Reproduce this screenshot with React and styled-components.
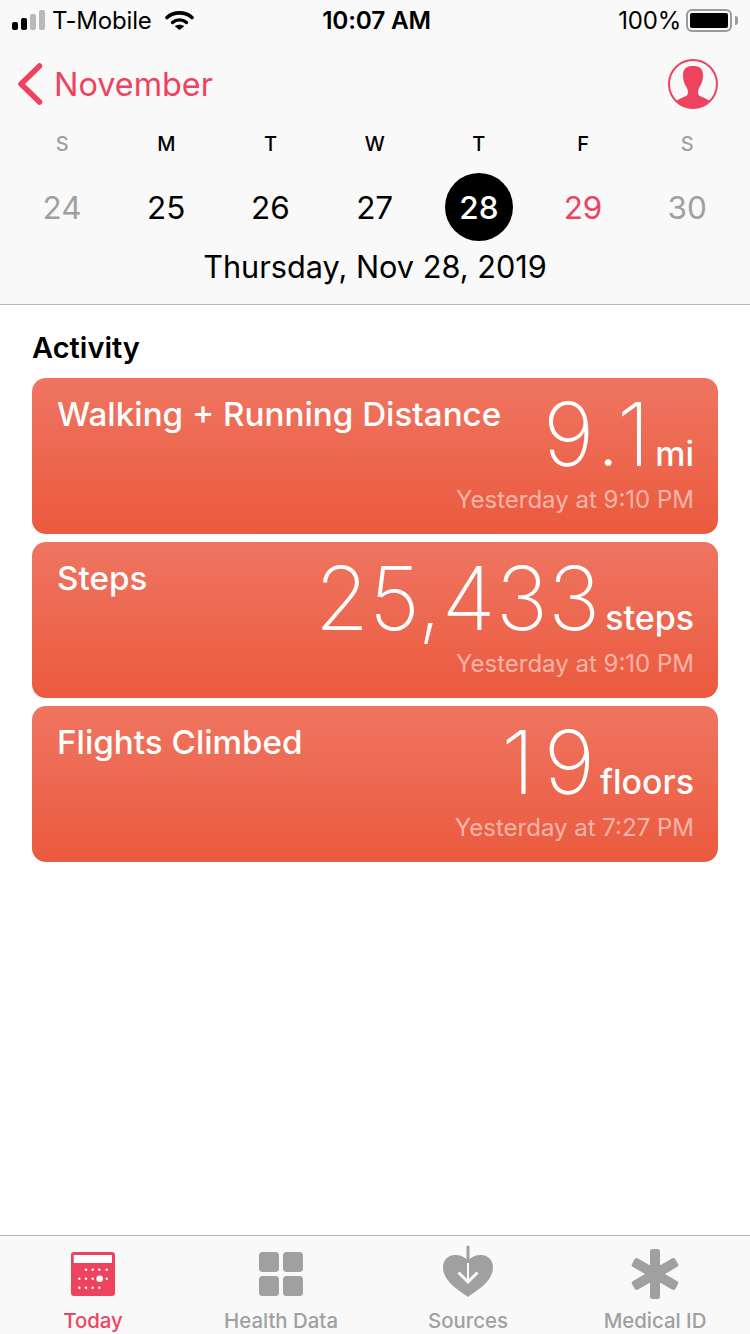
import React from 'react';
import styled, { createGlobalStyle } from 'styled-components';

const Global = createGlobalStyle`
  html, body {
    margin: 0;
    padding: 0;
    background: #ffffff;
  }
  * {
    box-sizing: border-box;
  }
`;

const Page = styled.div`
  width: 750px;
  height: 1334px;
  display: flex;
  flex-direction: column;
  font-family: Inter, "Liberation Sans", sans-serif;
  color: #000;
  overflow: hidden;
`;

const Header = styled.header`
  height: 305px;
  background: #f9f9f9;
  border-bottom: 1px solid #b8b8ba;
  display: flex;
  flex-direction: column;
`;

const StatusBar = styled.div`
  height: 40px;
  padding: 0 12px;
  display: grid;
  grid-template-columns: 1fr auto 1fr;
  align-items: center;
  font-size: 24px;
  letter-spacing: -0.2px;
`;

const StatusLeft = styled.div`
  display: flex;
  align-items: center;
  gap: 7px;
`;

const StatusRight = styled.div`
  display: flex;
  align-items: center;
  justify-content: flex-end;
  gap: 5px;
`;

const Clock = styled.div`
  margin-left: 3px;
  font-size: 24.400px;
  font-weight: 600;
`;

const Signal = styled.div`
  display: flex;
  align-items: flex-end;
  gap: 3px;
  height: 20px;
`;

const SignalBar = styled.span`
  width: 6px;
  height: ${p => p.$h}px;
  border-radius: 2px;
  background: ${p => (p.$on ? '#000' : '#b9b9b9')};
`;

const WifiGlyph = styled.svg`
  margin-left: 6px;
`;

const Battery = styled.div`
  width: 46px;
  height: 23px;
  border: 2px solid #9a9a9a;
  border-radius: 6px;
  padding: 2px;
  margin-right: 6px;
  position: relative;
  &::after {
    content: '';
    position: absolute;
    right: -8px;
    top: 5px;
    width: 3px;
    height: 9px;
    background: #9a9a9a;
    border-radius: 0 3px 3px 0;
  }
`;

const BatteryFill = styled.div`
  height: 100%;
  background: #000;
  border-radius: 2px;
`;

const NavRow = styled.div`
  height: 60px;
  margin-top: 14px;
  padding: 0 32px 0 17px;
  display: flex;
  align-items: center;
  justify-content: space-between;
`;

const BackLink = styled.div`
  display: flex;
  align-items: center;
  gap: 10px;
  color: #ee435f;
  font-size: 32.400px;
`;

const Weekdays = styled.div`
  display: grid;
  grid-template-columns: repeat(7, 104.200px);
  padding: 0 10px;
  margin-top: 16px;
  height: 28px;
  align-items: center;
`;

const Weekday = styled.div`
  text-align: center;
  font-size: 20px;
  font-weight: 500;
  color: ${p => (p.$muted ? '#a0a0a0' : '#000')};
`;

const Days = styled.div`
  display: grid;
  grid-template-columns: repeat(7, 104.200px);
  padding: 0 10px;
  margin-top: 14px;
  height: 70px;
  align-items: center;
  justify-items: center;
`;

const Day = styled.div`
  width: 68px;
  height: 68px;
  border-radius: 50%;
  display: flex;
  align-items: center;
  justify-content: center;
  font-size: 31.500px;
  font-weight: ${p => (p.$selected ? 500 : 400)};
  background: ${p => (p.$selected ? '#000' : 'transparent')};
  color: ${p => (p.$selected ? '#fff' : p.$color || '#000')};
`;

const DateLine = styled.div`
  text-align: center;
  font-size: 30.700px;
  line-height: 40px;
  margin-top: 5px;
`;

const Main = styled.main`
  flex: 1;
  padding: 24px 32px 0;
  background: #fff;
`;

const SectionTitle = styled.h2`
  margin: 0 0 12px;
  font-size: 29px;
  line-height: 37px;
  font-weight: 600;
`;

const Cards = styled.div`
  display: flex;
  flex-direction: column;
  gap: 8px;
`;

const Card = styled.section`
  height: 156px;
  border-radius: 14px;
  padding: 14px 24px 0 25px;
  background: linear-gradient(180deg, #ef7561 0%, #eb5a3e 100%);
  color: #fff;
  display: flex;
  flex-direction: column;
`;

const CardTop = styled.div`
  display: flex;
  align-items: flex-start;
  justify-content: space-between;
`;

const CardTitle = styled.div`
  font-size: 33.200px;
  line-height: 44px;
  font-weight: 500;
  white-space: nowrap;
`;

const Reading = styled.div`
  display: flex;
  align-items: baseline;
  gap: 5px;
  white-space: nowrap;
`;

const Value = styled.span`
  font-size: 88px;
  line-height: 84px;
  font-weight: 250;
  letter-spacing: ${p => p.$track}px;
  margin-right: ${p => -p.$track}px;
`;

const Unit = styled.span`
  font-size: 34px;
  line-height: 40px;
  font-weight: 500;
`;

const Stamp = styled.div`
  margin-top: 9px;
  align-self: flex-end;
  font-size: 24px;
  line-height: 30px;
  white-space: nowrap;
  color: rgba(255, 255, 255, 0.55);
`;

const TabBar = styled.nav`
  height: 99px;
  background: #f9f9f9;
  border-top: 1px solid #b8b8ba;
  display: grid;
  grid-template-columns: 186px 190px 184px 190px;
`;

const Tab = styled.div`
  display: flex;
  flex-direction: column;
  align-items: center;
  color: ${p => (p.$active ? '#ee435f' : '#a0a0a0')};
  font-size: 20.400px;
  font-weight: 500;
  padding-top: 8px;
`;

const TabIcon = styled.svg`
  width: 60px;
  height: 60px;
  display: block;
  fill: currentColor;
`;

const TabLabel = styled.span`
  line-height: 26px;
  margin-top: 4px;
`;

const WifiIcon = () => (
  <WifiGlyph width="29" height="20" viewBox="0 0 29 20">
    <path d="M2 7.500C9 1.300 20 1.300 27 7.500" fill="none" stroke="#000" strokeWidth="3.600" strokeLinecap="round" />
    <path d="M7.500 12.500C11.500 9 17.500 9 21.500 12.500" fill="none" stroke="#000" strokeWidth="3.400" strokeLinecap="round" />
    <path d="M9.800 16.200C12.500 14.200 16.500 14.200 19.200 16.200L14.500 20z" fill="#000" />
  </WifiGlyph>
);

const Chevron = () => (
  <svg width="27" height="44" viewBox="0 0 27 44">
    <path d="M22.500 4 L4 22 L22.500 40" fill="none" stroke="#ee435f" strokeWidth="5.500" strokeLinecap="round" strokeLinejoin="round" />
  </svg>
);

const Avatar = () => (
  <svg width="50" height="50" viewBox="0 0 50 50">
    <defs>
      <clipPath id="avatar-clip">
        <circle cx="25" cy="25" r="24" />
      </clipPath>
    </defs>
    <path
      clipPath="url(#avatar-clip)"
      d="M25 7C19 7 15 9 15 16c0 3 .5 6 1.500 8.500 .6 1.500 1.500 2.500 2.200 4 .7 1.500 1.300 3 1.300 4.500 0 1.500-.5 3-1.500 3.700C15 38.500 10 39.500 7 44v8h36v-8c-3-4.500-8-5.500-11.500-7.300-1-.7-1.500-2.200-1.500-3.700 0-1.500.6-3 1.300-4.500 .7-1.500 1.600-2.500 2.200-4C34.500 22 35 19 35 16c0-7-4-9-10-9z"
      fill="#ee435f"
    />
    <circle cx="25" cy="25" r="24" fill="none" stroke="#ee435f" strokeWidth="2" />
  </svg>
);

const todayDots = [
  [15, 17.700], [21.700, 17.700], [28.300, 17.700], [35.700, 17.700],
  [8.300, 26.700], [15, 26.700], [21.700, 26.700], [35.700, 26.700],
  [8.300, 35.700], [15, 35.700], [21.700, 35.700], [28.300, 35.700],
];

const TodayIcon = () => (
  <TabIcon viewBox="0 0 60 60">
    <g transform="translate(8 8)">
      <rect x="0" y="0" width="44" height="44" rx="3" />
      <rect x="2.700" y="3" width="38.300" height="8" fill="#fff" />
      {todayDots.map(([x, y]) => (
        <circle key={`${x}-${y}`} cx={x} cy={y} r="1.200" fill="#fff" />
      ))}
      <circle cx="28.700" cy="26.700" r="3.300" fill="#fff" />
    </g>
  </TabIcon>
);

const HealthDataIcon = () => (
  <TabIcon viewBox="0 0 60 60">
    <rect x="8" y="8" width="20" height="20" rx="3.500" />
    <rect x="32" y="8" width="20" height="20" rx="3.500" />
    <rect x="8" y="32" width="20" height="20" rx="3.500" />
    <rect x="32" y="32" width="20" height="20" rx="3.500" />
  </TabIcon>
);

const SourcesIcon = () => (
  <TabIcon viewBox="0 0 60 60">
    <path d="M30 53C24 48 5.500 39 5 23.500 4.800 16 10.500 11 17 11c5.500 0 10 2 13 5.500C33 13 37.500 11 43 11c6.500 0 12.200 5 12 12.500C54.500 39 36 48 30 53z" />
    <path d="M30 3V19" stroke="currentColor" strokeWidth="3" fill="none" strokeLinecap="round" />
    <path d="M30 19V37" stroke="#f9f9f9" strokeWidth="2" fill="none" />
    <path d="M20.500 28.500 30 38 39.500 28.500" stroke="#f9f9f9" strokeWidth="3" fill="none" />
  </TabIcon>
);

const MedicalIcon = () => (
  <TabIcon viewBox="0 0 60 60">
    <g transform="translate(30 30)">
      <rect x="-5" y="-25" width="10" height="50" rx="2.500" />
      <rect x="-5" y="-25" width="10" height="50" rx="2.500" transform="rotate(60)" />
      <rect x="-5" y="-25" width="10" height="50" rx="2.500" transform="rotate(-60)" />
    </g>
  </TabIcon>
);

const weekdays = [
  { label: 'S', muted: true },
  { label: 'M' },
  { label: 'T' },
  { label: 'W' },
  { label: 'T' },
  { label: 'F' },
  { label: 'S', muted: true },
];

const days = [
  { n: 24, color: '#a0a0a0' },
  { n: 25 },
  { n: 26 },
  { n: 27 },
  { n: 28, selected: true },
  { n: 29, color: '#ee435f' },
  { n: 30, color: '#a0a0a0' },
];

// track widens readings with a "1" in them, that digit is narrower in Inter
const activities = [
  { title: 'Walking + Running Distance', value: '9.1', track: 4, unit: 'mi', stamp: 'Yesterday at 9:10 PM' },
  { title: 'Steps', value: '25,433', track: 0, unit: 'steps', stamp: 'Yesterday at 9:10 PM' },
  { title: 'Flights Climbed', value: '19', track: 9, unit: 'floors', stamp: 'Yesterday at 7:27 PM' },
];

const tabs = [
  { label: 'Today', icon: <TodayIcon />, active: true },
  { label: 'Health Data', icon: <HealthDataIcon /> },
  { label: 'Sources', icon: <SourcesIcon /> },
  { label: 'Medical ID', icon: <MedicalIcon /> },
];

const App = () => (
  <Page>
    <Global />
    <Header>
      <StatusBar>
        <StatusLeft>
          <Signal>
            <SignalBar $on $h={8} />
            <SignalBar $on $h={12} />
            <SignalBar $h={16} />
            <SignalBar $h={20} />
          </Signal>
          <span>T-Mobile</span>
          <WifiIcon />
        </StatusLeft>
        <Clock>10:07 AM</Clock>
        <StatusRight>
          <span>100%</span>
          <Battery>
            <BatteryFill />
          </Battery>
        </StatusRight>
      </StatusBar>
      <NavRow>
        <BackLink>
          <Chevron />
          <span>November</span>
        </BackLink>
        <Avatar />
      </NavRow>
      <Weekdays>
        {weekdays.map((d, i) => (
          <Weekday key={i} $muted={d.muted}>{d.label}</Weekday>
        ))}
      </Weekdays>
      <Days>
        {days.map(d => (
          <Day key={d.n} $selected={d.selected} $color={d.color}>{d.n}</Day>
        ))}
      </Days>
      <DateLine>Thursday, Nov 28, 2019</DateLine>
    </Header>
    <Main>
      <SectionTitle>Activity</SectionTitle>
      <Cards>
        {activities.map(a => (
          <Card key={a.title}>
            <CardTop>
              <CardTitle>{a.title}</CardTitle>
              <Reading>
                <Value $track={a.track}>{a.value}</Value>
                <Unit>{a.unit}</Unit>
              </Reading>
            </CardTop>
            <Stamp>{a.stamp}</Stamp>
          </Card>
        ))}
      </Cards>
    </Main>
    <TabBar>
      {tabs.map(t => (
        <Tab key={t.label} $active={t.active}>
          {t.icon}
          <TabLabel>{t.label}</TabLabel>
        </Tab>
      ))}
    </TabBar>
  </Page>
);

export default App;
